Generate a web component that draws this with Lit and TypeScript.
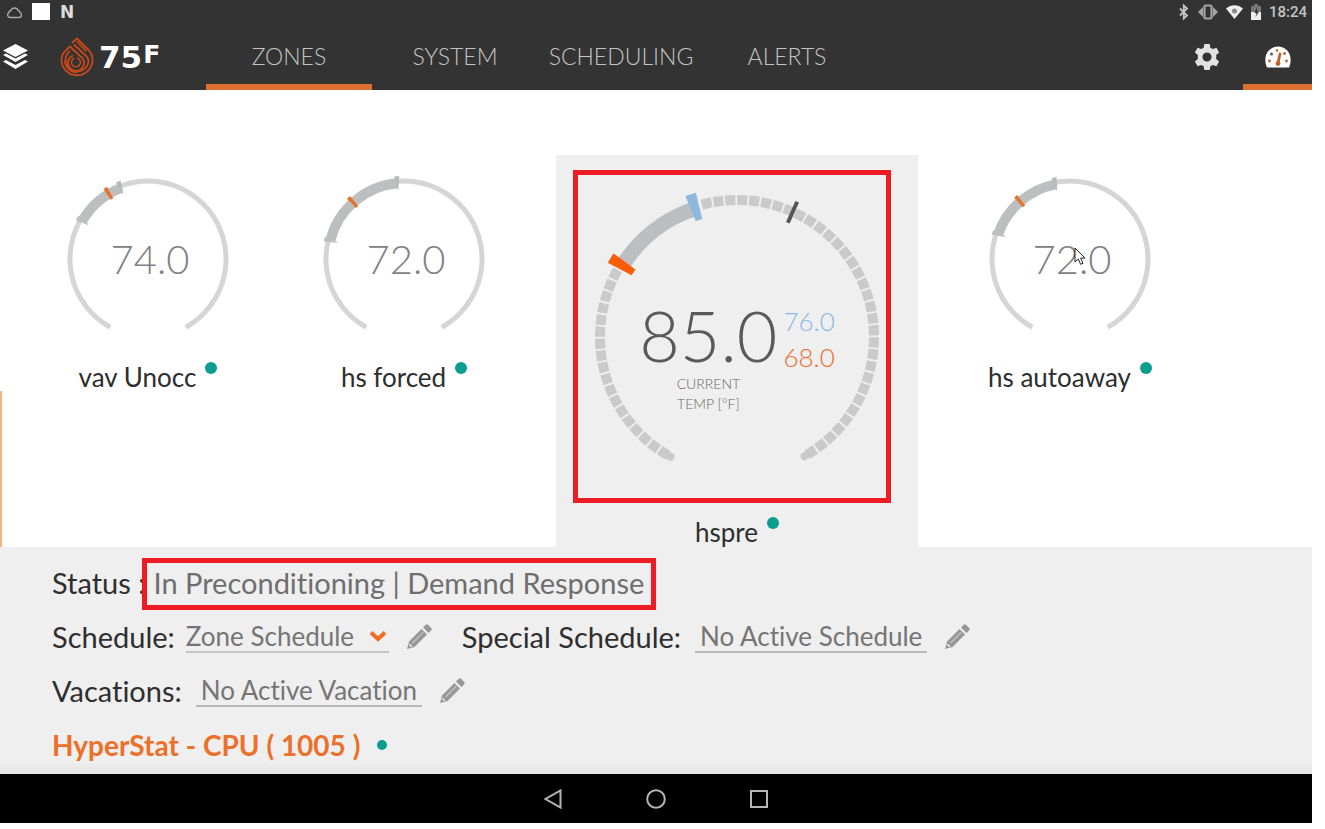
import { LitElement, html, svg, css, nothing } from "lit";
import { customElement, property, state } from "lit/decorators.js";

const point = (c: number, r: number, deg: number): [number, number] => {
  const a = (deg * Math.PI) / 180;
  return [c + r * Math.cos(a), c + r * Math.sin(a)];
};

const arc = (c: number, r: number, from: number, to: number): string => {
  const [x1, y1] = point(c, r, from);
  const [x2, y2] = point(c, r, to);
  const large = to - from > 180 ? 1 : 0;
  return `M${x1} ${y1}A${r} ${r} 0 ${large} 1 ${x2} ${y2}`;
};

/* Tapered tick: wide at the outer radius, narrow at the inner one. */
const wedge = (
  c: number,
  deg: number,
  inner: number,
  outer: number,
  wIn: number,
  wOut: number
): string => {
  const a = (deg * Math.PI) / 180;
  const at = (r: number, off: number) =>
    `${c + r * Math.cos(a) - off * Math.sin(a)},${c + r * Math.sin(a) + off * Math.cos(a)}`;
  return [
    at(outer, -wOut / 2),
    at(outer, wOut / 2),
    at(inner, wIn / 2),
    at(inner, -wIn / 2),
  ].join(" ");
};

interface Zone {
  name: string;
  temp: string;
  low: number;
  high: number;
  current: number;
  cool?: string;
  heat?: string;
  selected?: boolean;
  pointer?: boolean;
}

const ZONES: Zone[] = [
  { name: "vav Unocc", temp: "74.0", low: 210, high: 249, current: 239 },
  { name: "hs forced", temp: "72.0", low: 194, high: 265, current: 228 },
  {
    name: "hspre",
    temp: "85.0",
    low: 212,
    high: 252,
    current: 294,
    cool: "76.0",
    heat: "68.0",
    selected: true,
  },
  { name: "hs autoaway", temp: "72.0", low: 199, high: 259, current: 229, pointer: true },
];

@customElement("zone-dial")
export class ZoneDial extends LitElement {
  @property({ attribute: false }) zone!: Zone;

  static styles = css`
    :host {
      display: grid;
      justify-items: center;
    }
    .face,
    .value,
    .readout {
      grid-area: 1 / 1;
    }
    .face {
      display: block;
    }
    .value {
      align-self: center;
      padding-left: 4px;
      font-size: 40px;
      line-height: 48px;
      font-weight: 300;
      color: #808080;
    }
    .readout {
      display: flex;
      gap: 6px;
      align-self: start;
      padding-top: 108px;
    }
    .now {
      display: flex;
      flex-direction: column;
      align-items: center;
    }
    .big {
      font-size: 70px;
      line-height: 84px;
      font-weight: 300;
      color: #595959;
    }
    .caption {
      margin-top: -3px;
      font-size: 14px;
      line-height: 20px;
      font-weight: 300;
      text-align: center;
      color: #666;
    }
    .setpoints {
      display: flex;
      flex-direction: column;
      padding-top: 10px;
      font-size: 26px;
      line-height: 36px;
      font-weight: 300;
    }
    .cool {
      color: #8ab8e6;
    }
    .heat {
      color: #f26a2e;
    }
  `;

  private small(z: Zone) {
    return html`
      <svg class="face" width="180" height="180" viewBox="0 0 180 180" aria-hidden="true">
        <path d=${arc(90, 78, 119, 421)} fill="none" stroke="#d5d5d5" stroke-width="5" />
        <path d=${arc(90, 76, z.low, z.high)} fill="none" stroke="#bdbec0" stroke-width="10" />
        <polygon points=${wedge(90, z.low, 69, 82, 1, 5)} fill="#bdbec0" />
        <polygon points=${wedge(90, z.high, 70, 83, 1, 5)} fill="#b8b9bb" />
        <polygon points=${wedge(90, z.current, 70, 83, 3, 4)} fill="#e2742e" />
      </svg>
      <span class="value">${z.temp}</span>
    `;
  }

  private large(z: Zone) {
    const cells = Array.from({ length: 60 }, (_, i) => 121 + i * 5)
      .filter((a) => a < z.low - 2 || a > z.high + 1)
      .map(
        (a) => svg`<path d=${arc(152, 137, a - 0.9, a + 3.3)} fill="none" stroke="#cacaca"
          stroke-width="10" />`
      );
    return html`
      <svg class="face" width="304" height="304" viewBox="0 0 304 304" aria-hidden="true">
        ${cells}
        <path d=${arc(152, 137, 119, 119.1)} stroke="#cacaca" stroke-width="8" stroke-linecap="round" />
        <path d=${arc(152, 137, 420.4, 420.5)} stroke="#cacaca" stroke-width="8" stroke-linecap="round" />
        <path d=${arc(152, 135, z.low, z.high)} fill="none" stroke="#bdbec0" stroke-width="15" />
        <polygon points=${wedge(152, z.low, 122, 149, 7, 11)} fill="#fb5c05" />
        <polygon points=${wedge(152, z.high, 123, 150, 7, 11)} fill="#8fb8de" />
        <polygon points=${wedge(152, z.current, 125, 148, 4, 4)} fill="#555" />
      </svg>
      <div class="readout">
        <div class="now">
          <span class="big">${z.temp}</span>
          <span class="caption">CURRENT<br />TEMP [°F]</span>
        </div>
        <div class="setpoints">
          <span class="cool">${z.cool}</span>
          <span class="heat">${z.heat}</span>
        </div>
      </div>
    `;
  }

  render() {
    return this.zone.selected ? this.large(this.zone) : this.small(this.zone);
  }
}

@customElement("app-root")
export class AppRoot extends LitElement {
  @state() private tab = "ZONES";

  static styles = css`
    :host {
      display: flex;
      flex-direction: column;
      box-sizing: border-box;
      min-height: 100vh;
      padding: 0 13px 6px 0;
      background: #fff;
      font-family: Lato, "Open Sans", sans-serif;
      font-variant-ligatures: none;
      color: #333;
    }
    button {
      margin: 0;
      padding: 0;
      border: 0;
      background: none;
      font: inherit;
      font-variant-ligatures: none;
      color: inherit;
      cursor: pointer;
    }
    svg {
      display: block;
    }
    .head {
      background: #333;
      color: #fff;
    }
    .system {
      display: flex;
      align-items: center;
      justify-content: space-between;
      height: 24px;
      padding: 0 5px 0 7px;
    }
    .group {
      display: flex;
      align-items: center;
      gap: 10px;
    }
    .group.tight {
      gap: 8px;
    }
    .n {
      font: 900 17px/20px "DejaVu Sans", sans-serif;
      color: #ddd;
    }
    .clock {
      font: 500 15px/20px Roboto, sans-serif;
      color: #c4c4c4;
    }
    .bar {
      display: flex;
      height: 66px;
      align-items: stretch;
    }
    .layers {
      padding: 0 30px 0 2px;
    }
    .brand {
      display: flex;
      align-items: center;
      gap: 5px;
      width: 147px;
    }
    .word {
      display: flex;
      gap: 1px;
      align-items: flex-start;
      font: 700 31px/30px "DejaVu Sans", sans-serif;
    }
    .unit {
      font-size: 25px;
      line-height: 26px;
    }
    .tabs {
      display: flex;
      flex: 1;
    }
    .tab {
      box-sizing: border-box;
      min-width: 166px;
      padding: 4px 8px 0;
      border-bottom: 6px solid transparent;
      font-size: 23px;
      line-height: 30px;
      font-weight: 300;
      color: #c4c4c4;
    }
    .tool {
      display: grid;
      place-items: center;
      box-sizing: border-box;
      width: 69px;
      margin-left: 2px;
      padding-top: 6px;
      border-bottom: 6px solid transparent;
    }
    .on {
      border-bottom-color: #dc7031;
    }
    .zones {
      display: flex;
      flex: 1;
      padding-top: 65px;
      padding-right: 20px;
      background: #fff;
    }
    .edge {
      align-self: flex-end;
      width: 2px;
      height: 156px;
      margin-right: 18px;
      background: #f9b27c;
    }
    .zone {
      position: relative;
      display: flex;
      flex: 0 1 256px;
      flex-direction: column;
      align-items: center;
      gap: 13px;
      padding-top: 14px;
    }
    .zone.selected {
      flex-basis: 362px;
      gap: 28px;
      margin: 0 24px;
      padding-top: 30px;
      background: #efefef;
    }
    .name {
      display: flex;
      gap: 9px;
      height: 30px;
      font-size: 26px;
      line-height: 30px;
      color: #2e2e2e;
    }
    .dot {
      width: 12px;
      height: 12px;
      border-radius: 50%;
      background: #0c9c90;
    }
    .mark {
      position: absolute;
      border: 5px solid #ed1c24;
      pointer-events: none;
    }
    .mark.dial {
      inset: 15px 27px 44px 17px;
    }
    .mark.status {
      inset: 2px -12px 0 -12px;
    }
    .cursor {
      position: absolute;
      left: 132px;
      top: 92px;
    }
    .panel {
      padding: 9px 52px 2px;
      background: linear-gradient(#efefef 94%, #e4e4e4);
    }
    .row {
      display: flex;
      align-items: center;
      height: 54px;
      font-size: 29px;
      line-height: 34px;
      color: #2e2e2e;
    }
    .held {
      position: relative;
      display: flex;
      align-items: center;
      height: 54px;
      margin-left: 8px;
      color: #6e6e6e;
    }
    .pick {
      display: grid;
      align-items: center;
      width: 203px;
      margin-left: 11px;
      border-bottom: 2px solid #c4c4c4;
    }
    .pick select,
    .pick svg {
      grid-area: 1 / 1;
    }
    .pick select {
      width: 100%;
      height: 30px;
      margin: 0;
      padding: 0;
      border: 0;
      appearance: none;
      background: none;
      font: inherit;
      font-size: 26px;
      line-height: 30px;
      color: #757575;
    }
    .pick svg {
      justify-self: end;
      margin-right: 2px;
      pointer-events: none;
    }
    .row .slot {
      height: 32px;
      margin-left: 14px;
      padding: 0 5px;
      border-bottom: 2px solid #b8b8b8;
      font-size: 26px;
      line-height: 30px;
      color: #757575;
    }
    .edit {
      margin-left: 17px;
    }
    .second {
      margin-left: 30px;
    }
    .device {
      margin: 0;
      gap: 17px;
      font-size: 28px;
      font-weight: 700;
      color: #ec7029;
    }
    .device .dot {
      width: 10px;
      height: 10px;
    }
    .softkeys {
      display: flex;
      justify-content: center;
      height: 49px;
      background: #000;
    }
    .softkeys button {
      display: grid;
      place-items: center;
      width: 103px;
    }
  `;

  private renderZone(z: Zone) {
    return html`
      <section class="zone ${z.selected ? "selected" : ""}">
        <zone-dial .zone=${z}></zone-dial>
        <div class="name"><span>${z.name}</span><span class="dot"></span></div>
        ${z.selected ? html`<div class="mark dial"></div>` : nothing}
        ${z.pointer
          ? html`<svg class="cursor" width="13" height="19" viewBox="0 0 13 19" aria-hidden="true">
              <path d="M1 1v14l3.300-3 2.300 5.300 2.400-1-2.300-5.200H11z" fill="#fff" stroke="#222" />
            </svg>`
          : nothing}
      </section>
    `;
  }

  private edit(label: string) {
    return html`<button class="edit" aria-label=${label}>
      <svg width="26" height="26" viewBox="0 0 26 26">
        <path d="M1 25l2-7.500L15.500 5l5.500 5.500L8.500 23z" fill="#979797" />
        <path d="M17 3.500L19.500 1a2 2 0 0 1 2.800 0l2.700 2.700a2 2 0 0 1 0 2.800L22.500 9z" fill="#979797" />
        <path d="M6.500 19L17.500 8" stroke="#c2c2c2" stroke-width="1.200" />
        <path d="M3.200 20.200l2.600 2.600" stroke="#efefef" stroke-width="1.600" />
      </svg>
    </button>`;
  }

  render() {
    return html`
      <header class="head">
        <div class="system">
          <div class="group">
            <svg width="15" height="14" viewBox="0 0 15 14" aria-hidden="true">
              <path d="M3.500 12.500h8.500a2.500 2.500 0 0 0 1-4.800 2.500 2.500 0 0 0-1.800-2.200 4 4 0 0 0-7.400 0A3.500 3.500 0 0 0 1.500 8a2.600 2.600 0 0 0 2 4.500z"
                fill="none" stroke="#aaa" stroke-width="1.400" stroke-linejoin="round" />
            </svg>
            <svg width="18" height="18" viewBox="0 0 18 18" aria-hidden="true">
              <rect width="18" height="17" fill="#fff" />
            </svg>
            <span class="n">N</span>
          </div>
          <div class="group tight">
            <svg width="12" height="16" viewBox="0 0 12 16" aria-hidden="true">
              <path d="M2 4.500l7 7L5.800 14.500V1.500L9 4.500l-7 7" fill="none" stroke="#c4c4c4" stroke-width="1.800" />
            </svg>
            <svg width="20" height="16" viewBox="0 0 20 16" aria-hidden="true">
              <rect x="6.500" y="1.500" width="7" height="13" rx="1" fill="none" stroke="#a4a4a4" stroke-width="2.200" />
              <path d="M5 3v10L0 8zM15 3v10L20 8z" fill="#a4a4a4" />
            </svg>
            <svg width="17" height="14" viewBox="0 0 17 14" aria-hidden="true">
              <path d="M0 3.500C5-1 12-1 17 3.500L8.500 14z" fill="#eee" />
              <circle cx="8.500" cy="6" r="2.500" fill="#888" />
            </svg>
            <svg width="10" height="16" viewBox="0 0 10 16" aria-hidden="true">
              <path d="M3 0h4v2h3v14H0V2h3z" fill="#777" />
              <path d="M0 8h10v8H0z" fill="#eee" />
              <path d="M6 3L3.500 9h2l-1 4L8 7.500H6z" fill="#333" />
            </svg>
            <span class="clock">18:24</span>
          </div>
        </div>
        <div class="bar">
          <button class="layers" aria-label="Floors">
            <svg width="27" height="26" viewBox="0 0 27 26">
              <path d="M13.500 0L26 6.500 13.500 13 1 6.500z" fill="#fff" />
              <path d="M1 11l3-1.500 9.500 5 9.500-5 3 1.500-12.500 7z" fill="#fff" />
              <path d="M1 17.500L4 16l9.500 5 9.500-5 3 1.500L13.500 25z" fill="#fff" />
            </svg>
          </button>
          <div class="brand">
            <svg width="35" height="40" viewBox="0 0 35 40" aria-hidden="true">
              <g fill="none" stroke="#c9481a" stroke-width="1.800">
                <path d="M13 6L18 1.500 28 11.500c3.500 3 5.500 6.500 5.500 11A15.500 15.500 0 0 1 2.500 23c0-4.500 2-8 5.500-10.500l3-3L21 19" />
                <path d="M15 7.500l10 9.500a9.800 9.800 0 0 1 4.500 7 11.500 11.500 0 1 1-20.500-8l2-2" />
                <path d="M18 4.500L27 14" />
                <path d="M21 19a8 8 0 1 1-7-.5" />
                <path d="M18 21a4.500 4.500 0 1 1-3 .3" stroke-width="1.500" />
                <path d="M5.500 24a12.500 12.500 0 0 0 12.500 11.500" stroke-width="1.200" />
              </g>
            </svg>
            <span class="word">75<span class="unit">F</span></span>
          </div>
          <nav class="tabs">
            ${["ZONES", "SYSTEM", "SCHEDULING", "ALERTS"].map(
              (t) => html`<button class="tab ${t === this.tab ? "on" : ""}" @click=${() => (this.tab = t)}>
                ${t}
              </button>`
            )}
          </nav>
          <button class="tool" aria-label="Settings">
            <svg width="26" height="26" viewBox="0 0 24 24">
              <path fill="#e2e2e2" fill-rule="evenodd"
                d="M9.500 0h5l.6 3.400 2.300 1.300 3.300-1.200 2.500 4.300-2.700 2.300v3.800l2.700 2.300-2.500 4.300-3.300-1.200-2.300 1.300-.6 3.400h-5l-.6-3.400-2.300-1.300-3.300 1.200-2.500-4.300 2.700-2.300v-3.800L.8 7.800l2.500-4.300 3.300 1.200 2.300-1.300zM12 7.800a4.200 4.200 0 1 0 0 8.400 4.200 4.200 0 0 0 0-8.400z" />
            </svg>
          </button>
          <button class="tool on" aria-label="Dashboard">
            <svg width="26" height="22" viewBox="0 0 26 22">
              <path d="M2 21.500C-3 10 4 .5 13 .5S29 10 24 21.500z" fill="#fff" />
              <path d="M11.500 17L14 6.500l2.500.5-2 10z" fill="#c2622e" />
              <circle cx="13" cy="17.500" r="2.400" fill="#c2622e" />
              <circle cx="12" cy="4.500" r="1.300" fill="#c2622e" />
              <circle cx="6.500" cy="8" r="1.500" fill="#555" />
              <circle cx="4.500" cy="15" r="1.400" fill="#c2622e" />
              <circle cx="19.500" cy="7.500" r="1.400" fill="#c2622e" />
              <circle cx="21.500" cy="15" r="1.400" fill="#c2622e" />
            </svg>
          </button>
        </div>
      </header>

      <main class="zones">
        <span class="edge"></span>
        ${ZONES.map((z) => this.renderZone(z))}
      </main>

      <section class="panel">
        <div class="row">
          <span>Status :</span>
          <span class="held">In Preconditioning | Demand Response<span class="mark status"></span></span>
        </div>
        <div class="row">
          <label for="schedule">Schedule:</label>
          <span class="pick">
            <select id="schedule">
              <option>Zone Schedule</option>
            </select>
            <svg width="18" height="12" viewBox="0 0 18 12" aria-hidden="true">
              <path d="M2 2.500l7 6.500 7-6.500" fill="none" stroke="#f26f21" stroke-width="4" />
            </svg>
          </span>
          ${this.edit("Edit schedule")}
          <span class="second">Special Schedule:</span>
          <button class="slot">No Active Schedule</button>
          ${this.edit("Edit special schedule")}
        </div>
        <div class="row">
          <span>Vacations:</span>
          <button class="slot">No Active Vacation</button>
          ${this.edit("Edit vacation")}
        </div>
        <h2 class="row device"><span>HyperStat - CPU ( 1005 )</span><span class="dot"></span></h2>
      </section>

      <footer class="softkeys">
        <button aria-label="Back">
          <svg width="20" height="22" viewBox="0 0 20 22">
            <path d="M17.500 2.500v17L2.500 11z" fill="none" stroke="#b5b5b5" stroke-width="2" />
          </svg>
        </button>
        <button aria-label="Home">
          <svg width="22" height="22" viewBox="0 0 22 22">
            <circle cx="11" cy="11" r="8.800" fill="none" stroke="#b5b5b5" stroke-width="2" />
          </svg>
        </button>
        <button aria-label="Recent apps">
          <svg width="20" height="20" viewBox="0 0 20 20">
            <rect x="2" y="2" width="16" height="16" fill="none" stroke="#b5b5b5" stroke-width="2" />
          </svg>
        </button>
      </footer>
    `;
  }
}
